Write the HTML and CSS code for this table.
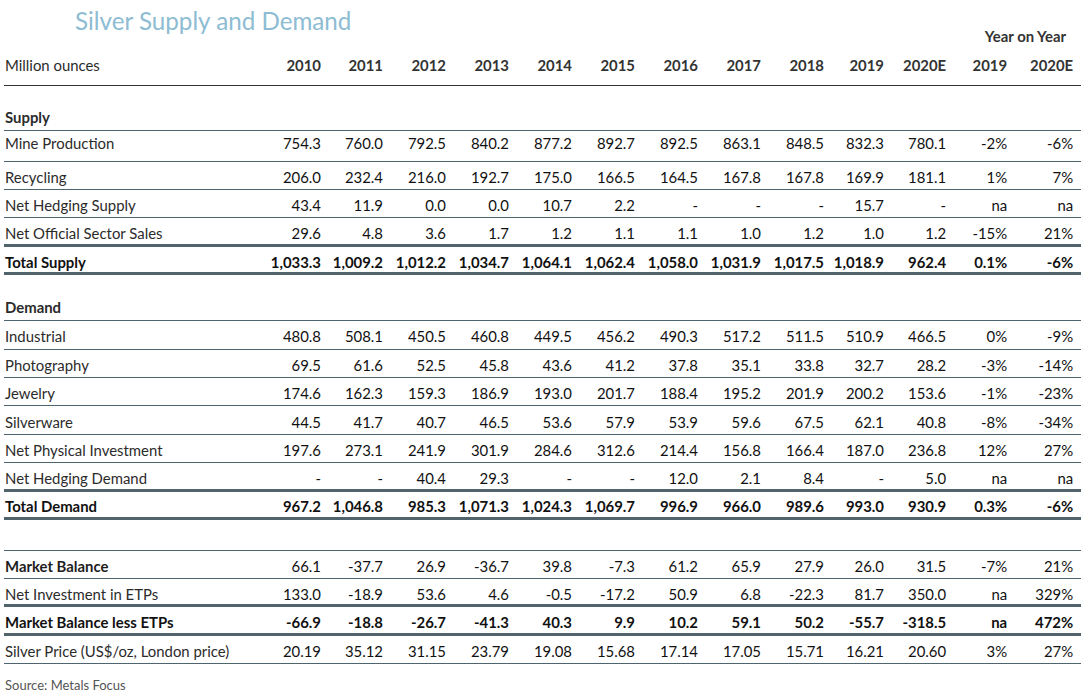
FILE: index.html
```html
<!DOCTYPE html>
<html lang="en">
<head>
<meta charset="utf-8">
<title>Silver Supply and Demand</title>
<link rel="stylesheet" href="styles.css">
</head>
<body>
<main class="page">
<table class="sd">
<colgroup>
<col class="w-label"><col class="w63"><col class="w62"><col class="w63"><col class="w63"><col class="w63"><col class="w63"><col class="w63"><col class="w63"><col class="w63"><col class="w60"><col class="w62"><col class="w61"><col class="w74">
</colgroup>
<thead>
<tr class="r-top"><th class="title" colspan="12">Silver Supply and Demand</th><th class="yoy" colspan="2">Year on Year</th></tr>
<tr class="r-head"><th class="lbl">Million ounces</th><th>2010</th><th>2011</th><th>2012</th><th>2013</th><th>2014</th><th>2015</th><th>2016</th><th>2017</th><th>2018</th><th>2019</th><th>2020E</th><th>2019</th><th class="last">2020E</th></tr>
</thead>
<tbody>
<tr class="r-section"><th class="lbl" colspan="14">Supply</th></tr>
<tr class="row first"><th class="lbl">Mine Production</th><td>754.3</td><td>760.0</td><td>792.5</td><td>840.2</td><td>877.2</td><td>892.7</td><td>892.5</td><td>863.1</td><td>848.5</td><td>832.3</td><td>780.1</td><td>-2%</td><td class="last">-6%</td></tr>
<tr class="row"><th class="lbl">Recycling</th><td>206.0</td><td>232.4</td><td>216.0</td><td>192.7</td><td>175.0</td><td>166.5</td><td>164.5</td><td>167.8</td><td>167.8</td><td>169.9</td><td>181.1</td><td>1%</td><td class="last">7%</td></tr>
<tr class="row"><th class="lbl">Net Hedging Supply</th><td>43.4</td><td>11.9</td><td>0.0</td><td>0.0</td><td>10.7</td><td>2.2</td><td>-</td><td>-</td><td>-</td><td>15.7</td><td>-</td><td>na</td><td class="last">na</td></tr>
<tr class="row thick"><th class="lbl">Net Official Sector Sales</th><td>29.6</td><td>4.8</td><td>3.6</td><td>1.7</td><td>1.2</td><td>1.1</td><td>1.1</td><td>1.0</td><td>1.2</td><td>1.0</td><td>1.2</td><td>-15%</td><td class="last">21%</td></tr>
<tr class="row thick total"><th class="lbl">Total Supply</th><td>1,033.3</td><td>1,009.2</td><td>1,012.2</td><td>1,034.7</td><td>1,064.1</td><td>1,062.4</td><td>1,058.0</td><td>1,031.9</td><td>1,017.5</td><td>1,018.9</td><td>962.4</td><td>0.1%</td><td class="last">-6%</td></tr>
<tr class="r-section r-section2"><th class="lbl" colspan="14">Demand</th></tr>
<tr class="row"><th class="lbl">Industrial</th><td>480.8</td><td>508.1</td><td>450.5</td><td>460.8</td><td>449.5</td><td>456.2</td><td>490.3</td><td>517.2</td><td>511.5</td><td>510.9</td><td>466.5</td><td>0%</td><td class="last">-9%</td></tr>
<tr class="row"><th class="lbl">Photography</th><td>69.5</td><td>61.6</td><td>52.5</td><td>45.8</td><td>43.6</td><td>41.2</td><td>37.8</td><td>35.1</td><td>33.8</td><td>32.7</td><td>28.2</td><td>-3%</td><td class="last">-14%</td></tr>
<tr class="row"><th class="lbl">Jewelry</th><td>174.6</td><td>162.3</td><td>159.3</td><td>186.9</td><td>193.0</td><td>201.7</td><td>188.4</td><td>195.2</td><td>201.9</td><td>200.2</td><td>153.6</td><td>-1%</td><td class="last">-23%</td></tr>
<tr class="row"><th class="lbl">Silverware</th><td>44.5</td><td>41.7</td><td>40.7</td><td>46.5</td><td>53.6</td><td>57.9</td><td>53.9</td><td>59.6</td><td>67.5</td><td>62.1</td><td>40.8</td><td>-8%</td><td class="last">-34%</td></tr>
<tr class="row"><th class="lbl">Net Physical Investment</th><td>197.6</td><td>273.1</td><td>241.9</td><td>301.9</td><td>284.6</td><td>312.6</td><td>214.4</td><td>156.8</td><td>166.4</td><td>187.0</td><td>236.8</td><td>12%</td><td class="last">27%</td></tr>
<tr class="row thick"><th class="lbl">Net Hedging Demand</th><td>-</td><td>-</td><td>40.4</td><td>29.3</td><td>-</td><td>-</td><td>12.0</td><td>2.1</td><td>8.4</td><td>-</td><td>5.0</td><td>na</td><td class="last">na</td></tr>
<tr class="row thick total"><th class="lbl">Total Demand</th><td>967.2</td><td>1,046.8</td><td>985.3</td><td>1,071.3</td><td>1,024.3</td><td>1,069.7</td><td>996.9</td><td>966.0</td><td>989.6</td><td>993.0</td><td>930.9</td><td>0.3%</td><td class="last">-6%</td></tr>
<tr class="r-gap"><td colspan="14"></td></tr>
<tr class="row"><th class="lbl strong">Market Balance</th><td>66.1</td><td>-37.7</td><td>26.9</td><td>-36.7</td><td>39.8</td><td>-7.3</td><td>61.2</td><td>65.9</td><td>27.9</td><td>26.0</td><td>31.5</td><td>-7%</td><td class="last">21%</td></tr>
<tr class="row thick"><th class="lbl">Net Investment in ETPs</th><td>133.0</td><td>-18.9</td><td>53.6</td><td>4.6</td><td>-0.5</td><td>-17.2</td><td>50.9</td><td>6.8</td><td>-22.3</td><td>81.7</td><td>350.0</td><td>na</td><td class="last">329%</td></tr>
<tr class="row thick total"><th class="lbl">Market Balance less ETPs</th><td>-66.9</td><td>-18.8</td><td>-26.7</td><td>-41.3</td><td>40.3</td><td>9.9</td><td>10.2</td><td>59.1</td><td>50.2</td><td>-55.7</td><td>-318.5</td><td>na</td><td class="last">472%</td></tr>
<tr class="row"><th class="lbl">Silver Price (US$/oz, London price)</th><td>20.19</td><td>35.12</td><td>31.15</td><td>23.79</td><td>19.08</td><td>15.68</td><td>17.14</td><td>17.05</td><td>15.71</td><td>16.21</td><td>20.60</td><td>3%</td><td class="last">27%</td></tr>
</tbody>
</table>
<p class="source">Source: Metals Focus</p>
</main>
</body>
</html>
```

FILE: styles.css
```css
* { box-sizing: border-box; }
html, body { margin: 0; padding: 0; background: #ffffff; }
body {
  font-family: Lato, "Open Sans", "Liberation Sans", sans-serif;
  font-size: 14.9px;
  color: #2a2a2a;
}
.page { width: 1086px; height: 697px; padding-left: 4px; overflow: hidden; }

.sd {
  border-collapse: separate;
  border-spacing: 0;
  table-layout: fixed;
  width: 1077px;
}
.w-label { width: 254px; }
.w63 { width: 63px; }
.w62 { width: 62px; }
.w61 { width: 61px; }
.w60 { width: 60px; }
.w74 { width: 74px; }

.sd th, .sd td {
  padding: 3px 0 0 0;
  text-align: right;
  white-space: nowrap;
  font-weight: 400;
  line-height: 18px;
  vertical-align: middle;
  color: #111;
}
.sd .last { padding-right: 8px; }
.sd .lbl { text-align: left; padding-left: 1px; color: #2b2b2b; }

/* top row: title + year on year */
.r-top { height: 45px; }
.sd .title {
  text-align: left;
  vertical-align: top;
  padding: 8px 0 0 71px;
  font-size: 24.2px;
  line-height: 26px;
  font-weight: 400;
  color: #8dbcd3;
}
.sd .yoy {
  vertical-align: bottom;
  padding: 0 15px 0 0;
  font-weight: 700;
  color: #333;
}

/* header years */
.r-head { height: 41px; }
.r-head > th {
  padding-top: 0;
  font-weight: 700;
  color: #333;
  border-bottom: 1px solid #333;
}
.r-head > th.lbl { font-weight: 400; }

/* section labels */
.r-section { height: 45px; }
.r-section2 { height: 46px; }
.r-section > th {
  vertical-align: bottom;
  padding: 0 0 4px 1px;
  font-weight: 700;
  color: #1e1e1e;
  border-bottom: 1px solid #4e6570;
}

/* data rows */
.row { height: 28.4px; }
.row > * { border-bottom: 1px solid #4e6570; }
.row.first { height: 30.7px; }
.row.first > * { vertical-align: top; padding-top: 3px; }
.row.thick > * { border-bottom: 3px solid #51646e; padding-top: 4px; }
.row.total > * { font-weight: 700; color: #111; }
.sd .strong { font-weight: 700; color: #1e1e1e; }

.r-gap { height: 30.6px; }
.r-gap > td { border-bottom: 1px solid #4e6570; }

.source {
  margin: 13px 0 0 1px;
  font-size: 13px;
  line-height: 16px;
  color: #555;
}
```
